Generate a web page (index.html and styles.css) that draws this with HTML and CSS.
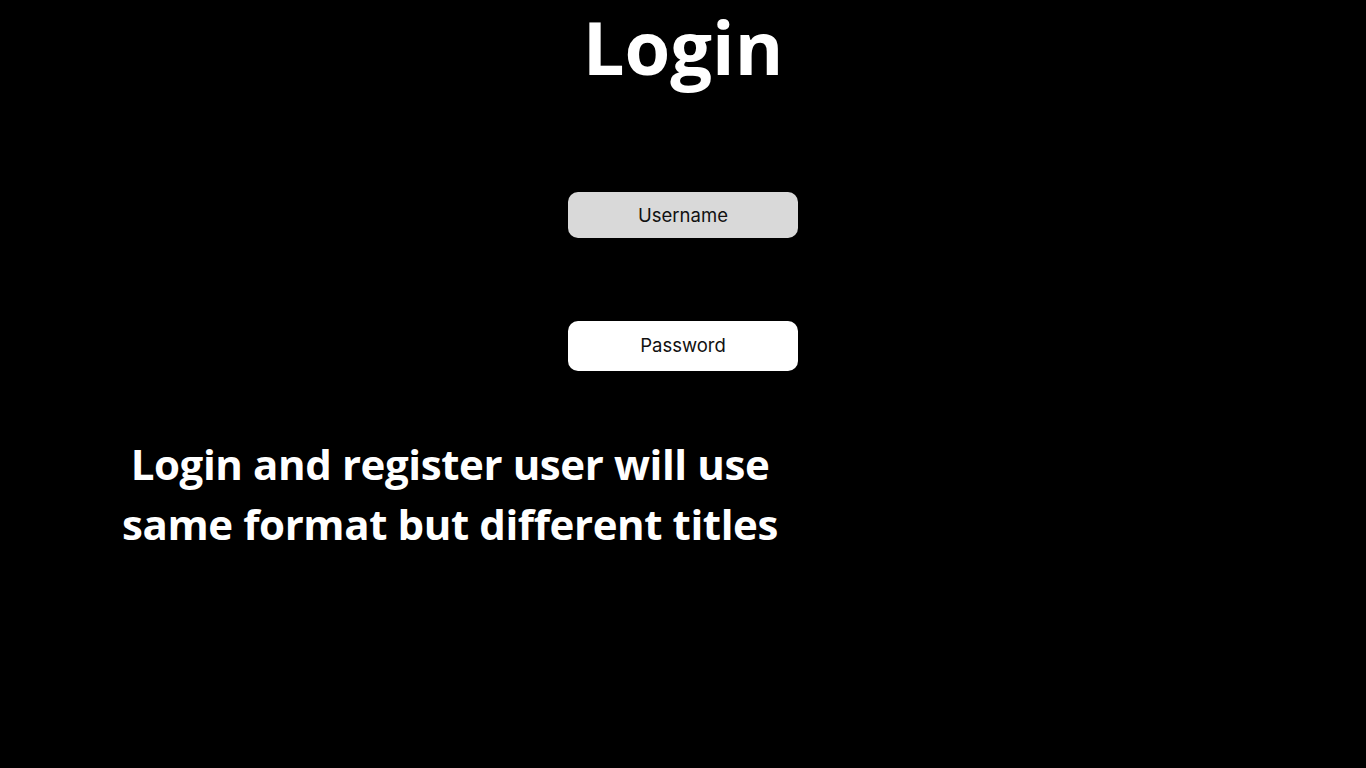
FILE: index.html
```html
<!DOCTYPE html>
<html lang="en">
<head>
<meta charset="utf-8">
<title>Login</title>
<link rel="stylesheet" href="styles.css">
</head>
<body>
<main class="page">
  <h1 class="title">Login</h1>
  <div class="fields">
    <div class="field field-user">Username</div>
    <div class="field field-pass">Password</div>
  </div>
  <p class="note">Login and register user will use<br>same format but different titles</p>
</main>
</body>
</html>
```
FILE: styles.css
```css
html, body {
  margin: 0;
  padding: 0;
  background: #000;
  width: 1366px;
  height: 768px;
  overflow: hidden;
}
.page {
  display: flex;
  flex-direction: column;
  font-family: "Open Sans", "Liberation Sans", sans-serif;
  color: #fff;
}
.title {
  margin: -4px 0 0 0;
  text-align: center;
  font-size: 74px;
  font-weight: 700;
  line-height: 102px;
}
.fields {
  display: flex;
  flex-direction: column;
  align-items: center;
  gap: 83px;
  margin-top: 94px;
}
.field {
  width: 230px;
  border-radius: 10px;
  display: flex;
  align-items: center;
  justify-content: center;
  font-size: 18.5px;
  color: #111;
  font-family: "Inter", "Open Sans", sans-serif;
}
.field-user {
  height: 46px;
  background: #d9d9d9;
}
.field-pass {
  height: 50px;
  padding-bottom: 3px;
  box-sizing: border-box;
  background: #fff;
}
.note {
  margin: 63px 0 0 0;
  width: 900px;
  text-align: center;
  font-size: 42px;
  font-weight: 700;
  line-height: 60px;
  letter-spacing: -0.4px;
}
```
